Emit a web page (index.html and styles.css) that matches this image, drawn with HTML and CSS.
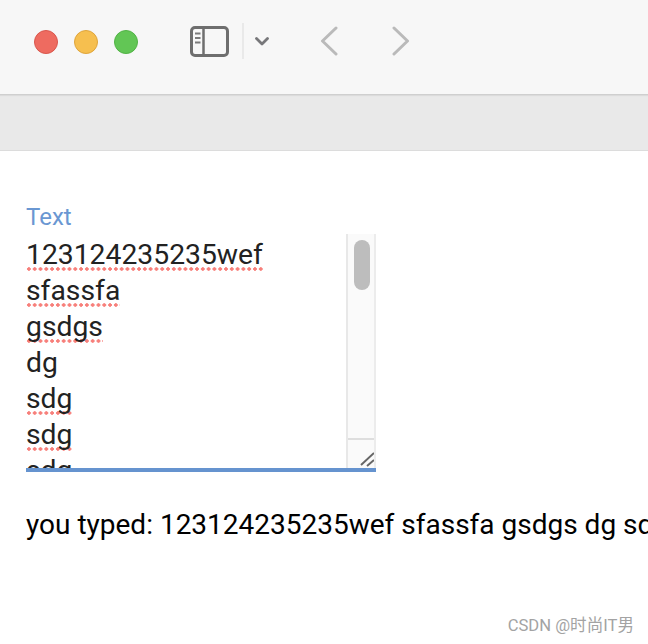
FILE: index.html
```html
<!DOCTYPE html>
<html lang="en">
  <head>
    <meta charset="UTF-8" />
    <meta name="viewport" content="width=device-width, initial-scale=1.0" />
    <title>Text input</title>
    <link rel="stylesheet" href="styles.css">
  </head>
  <body>
    <!-- Window chrome -->
    <header class="toolbar">
      <div class="lights">
        <span class="light red"></span>
        <span class="light yellow"></span>
        <span class="light green"></span>
      </div>
      <svg class="sidebar-icon" width="39" height="31" viewBox="0 0 39 31" fill="none">
        <rect x="1.5" y="1.5" width="36" height="28" rx="3.5" stroke="#6e6e6e" stroke-width="3" />
        <path d="M13.500 2v27" stroke="#6e6e6e" stroke-width="2.500" />
        <path d="M5 7.500h5.500M5 12h5.500M5 16.500h5.500" stroke="#7a7a7a" stroke-width="2" />
      </svg>
      <span class="divider"></span>
      <svg class="chevron" width="14" height="9" viewBox="0 0 14 9" fill="none">
        <path d="M1.500 1.500L7 7l5.500-5.500" stroke="#77777a" stroke-width="2.800" stroke-linecap="round" stroke-linejoin="round" />
      </svg>
      <svg class="nav-back" width="18" height="30" viewBox="0 0 18 30" fill="none">
        <path d="M16 2L2.500 15 16 28" stroke="#bababa" stroke-width="3" stroke-linecap="round" stroke-linejoin="round" />
      </svg>
      <svg class="nav-forward" width="18" height="30" viewBox="0 0 18 30" fill="none">
        <path d="M2 2l13.500 13L2 28" stroke="#bababa" stroke-width="3" stroke-linecap="round" stroke-linejoin="round" />
      </svg>
    </header>
    <div class="tabbar"></div>

    <main class="content">
      <label class="field-label">Text</label>
      <div class="textarea">
        <div class="textarea-text">
          <div><span class="misspelled">123124235235wef</span></div>
          <div><span class="misspelled">sfassfa</span></div>
          <div><span class="misspelled">gsdgs</span></div>
          <div>dg</div>
          <div><span class="misspelled">sdg</span></div>
          <div><span class="misspelled">sdg</span></div>
          <div><span class="misspelled">sdg</span></div>
        </div>
        <div class="scrollbar">
          <div class="scroll-track"><span class="scroll-thumb"></span></div>
          <div class="resizer">
            <svg width="18" height="18" viewBox="0 0 18 18" fill="none">
              <path d="M5 15L18 3M11 16l7-6" stroke="#666" stroke-width="2" />
            </svg>
          </div>
        </div>
      </div>
      <p class="typed">you typed: 123124235235wef sfassfa gsdgs dg sdg sdg sdg</p>
    </main>

    <div class="watermark">CSDN @时尚IT男</div>
  </body>
</html>
```

FILE: styles.css
```css
html,
body {
  margin: 0;
  padding: 0;
  overflow: hidden;
  width: 100%;
  height: 100%;
}

body {
  position: relative;
  background: #fff;
  font-family: Roboto, "Noto Sans CJK SC", sans-serif;
  color: #222;
}

/* Window chrome */
.toolbar {
  display: flex;
  align-items: center;
  box-sizing: border-box;
  height: 95px;
  padding: 0 0 12px 34px;
  background: #f7f7f7;
  border-bottom: 1px solid #cfcfcf;
  box-shadow: 0 1px 1px rgba(0, 0, 0, 0.06);
  position: relative;
}

.lights {
  display: flex;
  gap: 16px;
  margin-top: 1px;
}

.light {
  width: 24px;
  height: 24px;
  box-sizing: border-box;
  border-radius: 50%;
  border: 1px solid;
}

.red {
  background: #ee6b60;
  border-color: #d9574d;
}

.yellow {
  background: #f6bf4f;
  border-color: #dfa53c;
}

.green {
  background: #62c655;
  border-color: #52b346;
}

.sidebar-icon {
  margin-left: 52px;
}

.divider {
  width: 2px;
  height: 36px;
  margin-left: 13px;
  background: #e9e9e9;
}

.chevron {
  margin-left: 11px;
}

.nav-back {
  margin-left: 51px;
}

.nav-forward {
  margin-left: 54px;
}

.tabbar {
  box-sizing: border-box;
  height: 56px;
  background: #e9e9e9;
  border-bottom: 1px solid #dcdcdc;
}

/* Page */
.content {
  padding: 53px 0 0 26px;
}

.field-label {
  display: block;
  height: 30px;
  font-size: 24px;
  line-height: 26px;
  color: #6a97d2;
}

.textarea {
  display: flex;
  box-sizing: border-box;
  width: 350px;
  height: 238px;
  border-bottom: 4px solid #6593cf;
}

.textarea-text {
  flex: 1;
  overflow: hidden;
  padding-top: 3px;
  font-size: 28.300px;
  line-height: 36px;
  color: #222;
}

.misspelled {
  background-image: radial-gradient(circle, #f77f7a 1.500px, transparent 2px);
  background-size: 5.800px 4px;
  background-position: 0 100%;
  background-repeat: repeat-x;
}

.scrollbar {
  display: flex;
  flex-direction: column;
  box-sizing: border-box;
  width: 30px;
  background: #fafafa;
  border-left: 2px solid #e8e8e8;
  border-right: 2px solid #ececec;
}

.scroll-track {
  flex: 1;
  padding: 6px 4px 0 6px;
}

.scroll-thumb {
  display: block;
  width: 16px;
  height: 50px;
  border-radius: 8px;
  background: #bdbdbd;
}

.resizer {
  display: flex;
  align-items: flex-end;
  justify-content: flex-end;
  height: 28px;
  border-top: 2px solid #dedede;
}

.typed {
  margin: 35px 0 0;
  font-size: 28px;
  line-height: 36px;
  white-space: nowrap;
  color: #000;
}

.watermark {
  position: absolute;
  right: 14px;
  top: 616px;
  font-size: 16.600px;
  line-height: 20px;
  color: #a3a3a3;
}
```
